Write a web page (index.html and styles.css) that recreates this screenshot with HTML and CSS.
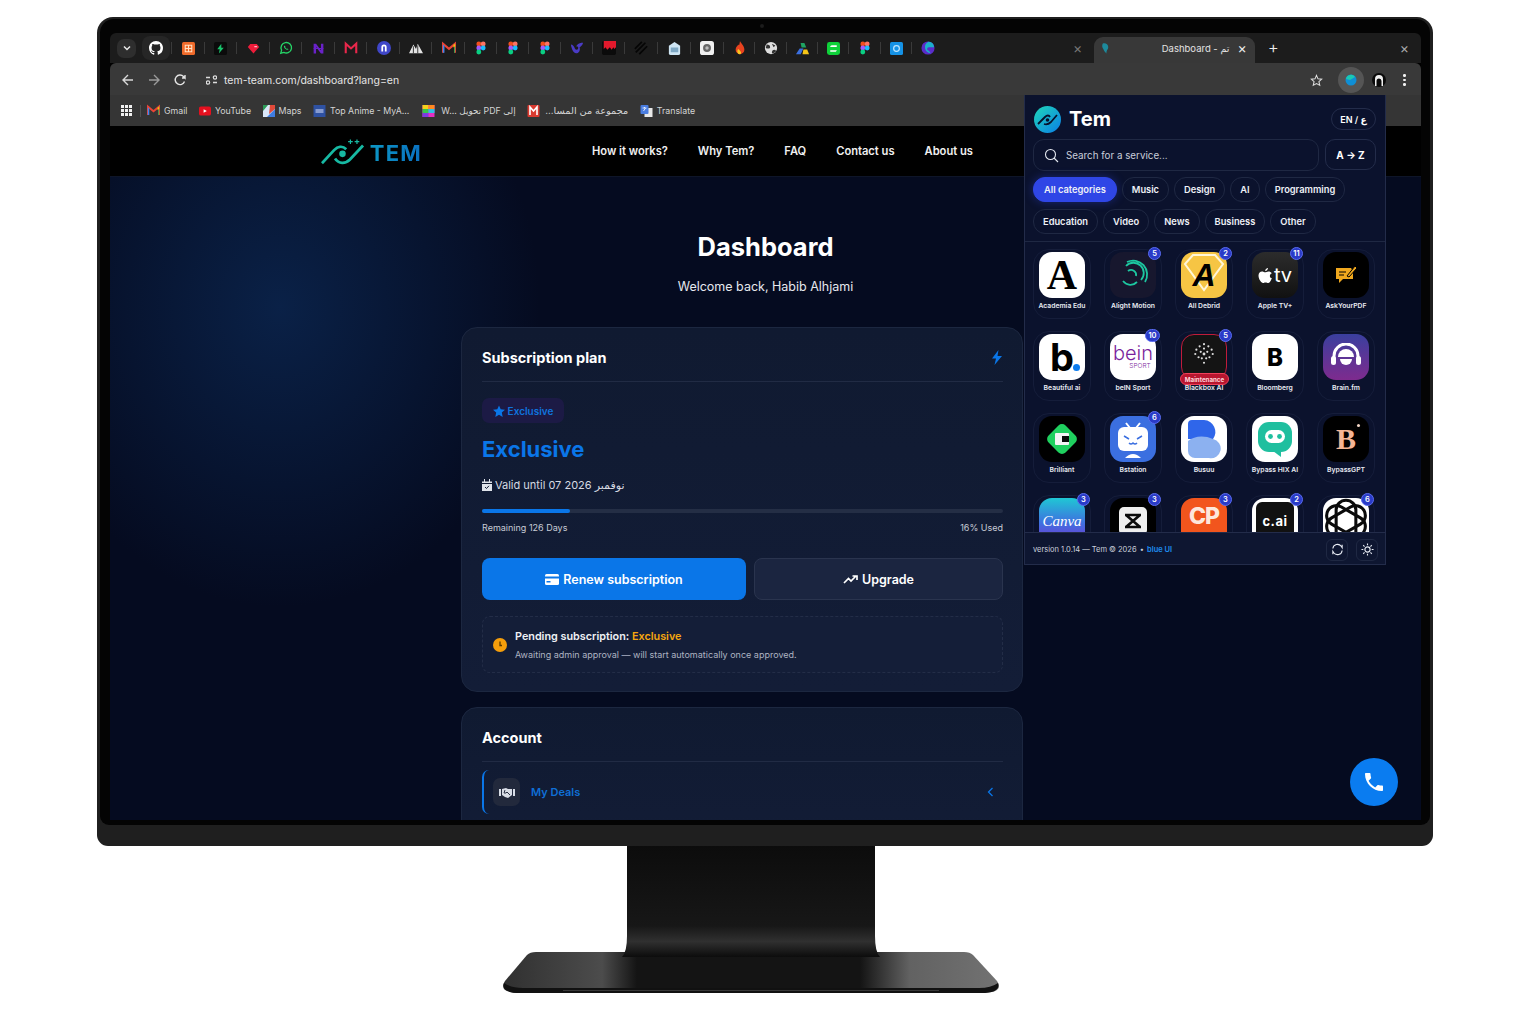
FILE: index.html
```html
<!DOCTYPE html>
<html lang="en">
<head>
  <meta charset="UTF-8" />
  <meta name="viewport" content="width=device-width, initial-scale=1.0"/>
  <title>Dashboard - Tem</title>
  <link rel="stylesheet" href="styles.css">
</head>
<body>
  <svg class="defs" width="0" height="0">
    <symbol id="figma" viewBox="0 0 16 16">
      <circle cx="5.500" cy="3.500" r="2.800" fill="#f24e1e"/><circle cx="10.500" cy="3.500" r="2.800" fill="#ff7262"/>
      <circle cx="5.500" cy="8" r="2.800" fill="#a259ff"/><circle cx="10.500" cy="8" r="2.800" fill="#1abcfe"/>
      <circle cx="5.500" cy="12.500" r="2.800" fill="#0acf83"/>
    </symbol>
    <symbol id="gmail" viewBox="0 0 16 16">
      <path d="M1 13.500V3l7 6 7-6v10.500" fill="none" stroke="#ea4335" stroke-width="2.400"/>
      <path d="M13.800 13.500V3.500L15 3v10.500z" fill="#34a853"/>
      <path d="M1 13.500V4l1.800 1.500v8z" fill="#4285f4"/>
      <path d="M13 4.500 15 3v3l-2 1.500z" fill="#fbbc04"/>
    </symbol>
  </svg>

  <div class="monitor">
    <div class="bezel">
    <div class="screen">

      <div class="tabstrip">
        <span class="tab-search"><svg width="10" height="10" viewBox="0 0 10 10"><path d="M2 3.500 5 6.500 8 3.500" fill="none" stroke="#e8e8e8" stroke-width="1.500"/></svg></span>
        <span class="pin pin-on"><svg width="14" height="14" viewBox="0 0 16 16"><path fill="#fff" d="M8 0C3.580 0 0 3.580 0 8c0 3.540 2.290 6.530 5.470 7.590.4.070.55-.17.55-.38 0-.19-.01-.82-.01-1.490-2.010.37-2.530-.49-2.690-.94-.09-.23-.48-.94-.82-1.130-.28-.15-.68-.52-.01-.53.63-.01 1.080.58 1.230.82.72 1.210 1.870.87 2.330.66.070-.52.28-.87.51-1.070-1.780-.2-3.640-.89-3.640-3.950 0-.87.31-1.590.82-2.150-.08-.2-.36-1.020.08-2.120 0 0 .67-.21 2.200.82.64-.18 1.320-.27 2-.27s1.360.09 2 .27c1.530-1.040 2.200-.82 2.200-.82.44 1.100.16 1.920.08 2.120.51.56.82 1.270.82 2.150 0 3.070-1.870 3.750-3.650 3.950.29.25.54.73.54 1.480 0 1.070-.01 1.930-.01 2.200 0 .21.15.46.55.38A8.013 8.013 0 0 0 16 8c0-4.420-3.580-8-8-8z"/></svg></span>
        <span class="pin"><svg width="13" height="13" viewBox="0 0 16 16"><rect width="16" height="16" rx="2" fill="#ef6a2a"/><path d="M4 4h8v8H4zM8 4v8M4 8h8" fill="none" stroke="#ffe2c4" stroke-width="1.300"/></svg></span>
        <span class="pin"><svg width="13" height="13" viewBox="0 0 16 16"><rect width="16" height="16" rx="2" fill="#0b0b0b"/><path d="M9 2 4 9h3l-1 5 6-7H9z" fill="#19c26b"/></svg></span>
        <span class="pin"><svg width="13" height="13" viewBox="0 0 16 16"><path d="M1 6 4 2.500h8L15 6l-7 8z" fill="#ee1c3a"/><path d="M9 5h3l1 1.500H9z" fill="#ffb7c2"/></svg></span>
        <span class="pin"><svg width="14" height="14" viewBox="0 0 16 16"><path d="M2 14l1-3.500a6 6 0 1 1 2.500 2.500z" fill="none" stroke="#25d366" stroke-width="1.500"/><path d="M6 5c-1 1 0 3 1.500 4S10 10.500 11 9.500L9.500 8.500 9 9 7 7l.5-.5z" fill="#25d366"/></svg></span>
        <span class="pin"><svg width="13" height="13" viewBox="0 0 16 16"><path d="M2 2h3l6 8V2h3v12h-3L5 6v8H2z" fill="#6a22c9"/><path d="M2 8h12" stroke="#6a22c9" stroke-width="1.500"/></svg></span>
        <span class="pin"><svg width="14" height="14" viewBox="0 0 16 16"><path d="M2 14V3l6 5.500L14 3v11" fill="none" stroke="#e8274b" stroke-width="2.400"/></svg></span>
        <span class="pin"><svg width="14" height="14" viewBox="0 0 16 16"><circle cx="8" cy="8" r="8" fill="#3f46c8"/><path d="M5 12V7a3 3 0 0 1 6 0v5H9V7a1 1 0 0 0-2 0v5z" fill="#fff"/></svg></span>
        <span class="pin"><svg width="14" height="14" viewBox="0 0 16 16"><path d="M0 14 5 4l3 5 2-6 6 11z" fill="#e4e4e4"/><path d="M5 6v8M10 5v9" stroke="#222" stroke-width="1"/></svg></span>
        <span class="pin"><svg width="14" height="14"><use href="#gmail"/></svg></span>
        <span class="pin"><svg width="14" height="14"><use href="#figma"/></svg></span>
        <span class="pin"><svg width="14" height="14"><use href="#figma"/></svg></span>
        <span class="pin"><svg width="14" height="14"><use href="#figma"/></svg></span>
        <span class="pin"><svg width="14" height="14" viewBox="0 0 16 16"><path d="M1 4c2 0 3 1 5 5 1-4 3-7 9-7-1 3-2 4-4 5 1 4-1 7-4 7S2 10 1 4z" fill="#4a3bc4"/><circle cx="7.500" cy="8" r="2" fill="#1a1a1a"/></svg></span>
        <span class="pin"><svg width="14" height="14" viewBox="0 0 16 16"><rect width="16" height="16" rx="2" fill="#0b0b0b"/><path d="M0 0h16v7l-2 2-1-2-2 3-2-3-3 3-2-3-2 2V0z" fill="#e3192c"/></svg></span>
        <span class="pin"><svg width="14" height="14" viewBox="0 0 16 16"><path d="M1 9 9 1M2 13 13 2M6 15 15 6" stroke="#050505" stroke-width="2"/></svg></span>
        <span class="pin"><svg width="15" height="15" viewBox="0 0 16 16"><path d="M8 1l6 4v8a2 2 0 0 1-2 2H4a2 2 0 0 1-2-2V5z" fill="#cfe6f4"/><path d="M4 7h8v5H4z" fill="#7ea8c4"/></svg></span>
        <span class="pin"><svg width="14" height="14" viewBox="0 0 16 16"><rect width="16" height="16" rx="3" fill="#f0f0f0"/><circle cx="8" cy="8" r="4.500" fill="#666"/><circle cx="8" cy="8" r="2" fill="#bbb"/></svg></span>
        <span class="pin"><svg width="14" height="14" viewBox="0 0 16 16"><path d="M8 0c1 3 5 5 5 10a5 5 0 0 1-10 0c0-3 2-4 3-6 1 1 1 2 2-4z" fill="#e8431f"/><path d="M6 9c-2 2-1 6 1.500 6S10 12 6 9z" fill="#f7c520"/></svg></span>
        <span class="pin"><svg width="14" height="14" viewBox="0 0 16 16"><circle cx="8" cy="8" r="7" fill="#dedede"/><path d="M3 4c3 0 4 1 4 3S4 9 2 8zM9 14c0-3 1-4 3-4l2 1c-1 2-3 3-5 3zM9 3l4 2-2 2z" fill="#333"/></svg></span>
        <span class="pin"><svg width="15" height="15" viewBox="0 0 16 16"><path d="M6 2h4l2 5H7z" fill="#1fa463"/><path d="M5 8 1 14h5l3-6z" fill="#3b6fe0"/><path d="M9 9h4l2 5H8z" fill="#f5c518"/></svg></span>
        <span class="pin"><svg width="13" height="13" viewBox="0 0 16 16"><rect width="16" height="16" rx="3" fill="#0fd13a"/><path d="M4 6c0-1 1-2 2-2h6v2H4zM4 10h8c0 1-1 2-2 2H4z" fill="#fff"/></svg></span>
        <span class="pin"><svg width="14" height="14"><use href="#figma"/></svg></span>
        <span class="pin"><svg width="13" height="13" viewBox="0 0 16 16"><rect width="16" height="16" rx="2" fill="#1592e6"/><circle cx="8" cy="8" r="3.500" fill="none" stroke="#bfe6ff" stroke-width="1.500"/></svg></span>
        <span class="pin pin-last"><svg width="14" height="14" viewBox="0 0 16 16"><circle cx="8" cy="8" r="7.500" fill="#5a2cc9"/><path d="M8 1a7 7 0 0 1 7 6H9a2 2 0 1 0 0 4l2 3A7 7 0 0 1 8 1z" fill="#1bb0c9"/></svg></span>
        <span class="tab-x tab-x-far">×</span>
        <div class="tab-active">
          <svg width="10" height="12" viewBox="0 0 10 12"><path d="M2 1c3-1 6 1 6 4S6 8 6 12L4 10C3 7 0 5 2 1z" fill="#1d8a9c"/></svg>
          <span class="tab-title">Dashboard - تم</span>
          <span class="tab-close">×</span>
        </div>
        <span class="tab-plus">+</span>
        <span class="tab-x tab-x-end">×</span>
      </div>

      <div class="toolbar">
        <svg class="tool" width="14" height="14" viewBox="0 0 14 14"><path d="M12 7H2.500M7 2 2 7l5 5" fill="none" stroke="#d8d8d8" stroke-width="1.400"/></svg>
        <svg class="tool" width="14" height="14" viewBox="0 0 14 14"><path d="M2 7h9.500M7 2l5 5-5 5" fill="none" stroke="#9a9a9a" stroke-width="1.400"/></svg>
        <svg class="tool" width="14" height="14" viewBox="0 0 14 14"><path d="M11.500 8.500A4.800 4.800 0 1 1 10.500 3.500L12 5V2M12 5H9" fill="none" stroke="#e4e4e4" stroke-width="1.400"/></svg>
        <div class="omnibox">
          <svg width="11" height="10" viewBox="0 0 11 10"><path d="M0 2.500h4M7 7.500h4" stroke="#ddd" stroke-width="1.300"/><circle cx="2" cy="7.500" r="1.700" fill="none" stroke="#ddd" stroke-width="1.200"/><circle cx="9" cy="2.500" r="1.700" fill="none" stroke="#ddd" stroke-width="1.200"/></svg>
          <span>tem-team.com/dashboard?lang=en</span>
        </div>
        <svg class="star" width="13" height="13" viewBox="0 0 14 14"><path d="M7 1.500 8.600 5.200l4 .4-3 2.700.9 3.900L7 10.200l-3.500 2 .9-3.900-3-2.700 4-.4z" fill="none" stroke="#e0e0e0" stroke-width="1.100"/></svg>
        <span class="ext-on"><svg width="12" height="12" viewBox="0 0 12 12"><circle cx="6" cy="6" r="5.500" fill="#0f8fd6"/><path d="M1 5a5 5 0 0 1 9-2L5 6z" fill="#1ac9b2"/></svg></span>
        <span class="avatar"><svg width="14" height="14" viewBox="0 0 14 14"><circle cx="7" cy="7" r="7" fill="#0a0a0a"/><path d="M3 13V6a4 4 0 0 1 8 0v7H9.500V8a2.500 2.500 0 0 0-5 0v5z" fill="#eee"/></svg></span>
        <span class="kebab"><i></i><i></i><i></i></span>
      </div>

      <div class="bookmarks">
        <span class="apps"><i></i><i></i><i></i><i></i><i></i><i></i><i></i><i></i><i></i></span>
        <span class="bm-sep"></span>
        <span class="bm"><svg width="13" height="13"><use href="#gmail"/></svg>Gmail</span>
        <span class="bm"><svg width="12" height="10" viewBox="0 0 13 10"><rect width="13" height="10" rx="2" fill="#e5101f"/><path d="M5 3l3.500 2L5 7z" fill="#fff"/></svg>YouTube</span>
        <span class="bm"><svg width="12" height="12" viewBox="0 0 12 12"><rect width="12" height="12" fill="#d9e6f8"/><path d="M0 0h5L0 6z" fill="#2c9a56"/><path d="M12 12H4l8-8z" fill="#3e7ce0"/><path d="M7 0h5v4L6 9z" fill="#e04a3a"/></svg>Maps</span>
        <span class="bm"><svg width="13" height="12" viewBox="0 0 12 12"><rect width="12" height="12" fill="#2e51a2"/><path d="M2 5h8M2 7h8" stroke="#dfe6ff" stroke-width="1"/></svg>Top Anime - MyA...</span>
        <span class="bm bm-wide"><svg width="13" height="12" viewBox="0 0 12 12"><rect width="12" height="12" fill="#e52fc4"/><rect width="6" height="4" fill="#f5d21a"/><rect x="6" width="6" height="4" fill="#ff8a1f"/><rect y="4" width="6" height="4" fill="#37c84a"/><rect x="6" y="4" width="6" height="4" fill="#2fc0e5"/><rect y="8" width="6" height="4" fill="#7b3be0"/></svg>W... تحويل PDF إلى</span>
        <span class="bm bm-rtl"><svg width="13" height="12" viewBox="0 0 12 12"><rect width="12" height="12" rx="1" fill="#d93a30"/><path d="M2.500 10V2L6 6l3.500-4v8" fill="none" stroke="#fff" stroke-width="1.600"/></svg><span dir="rtl">مجموعة من المسا...</span></span>
        <span class="bm bm-rtl-next"><svg width="13" height="12" viewBox="0 0 12 12"><rect x="4" y="3" width="8" height="9" fill="#e8e8e8"/><rect width="8" height="9" rx="1" fill="#4a7de0"/><path d="M2 3h4M4 2v1M3 6l2-3" stroke="#fff" stroke-width=".8" fill="none"/></svg>Translate</span>
      </div>

      <nav class="sitenav">
        <div class="brand">
          <svg width="48" height="28" viewBox="0 0 48 28">
            <path d="M1 26 14 12c4-4 9-5 13-1M15 21c4 6 11 6 16 1L45 7" fill="none" stroke="#17b9a3" stroke-width="3"/>
            <circle cx="23" cy="16" r="3.500" fill="#17b9a3"/>
            <path d="M29 3h5M31.500 .5v5M36 3h5M38.500 .5v5" stroke="#17b9a3" stroke-width="1.300"/>
          </svg>
          <span class="brand-name">TEM</span>
        </div>
        <div class="navlinks">
          <a>How it works?</a><a>Why Tem?</a><a>FAQ</a><a>Contact us</a><a>About us</a>
        </div>
      </nav>

      <main class="page">
        <h1>Dashboard</h1>
        <p class="welcome">Welcome back, Habib Alhjami</p>

        <section class="card">
          <div class="card-head">
            <h2>Subscription plan</h2>
            <svg width="12" height="15" viewBox="0 0 12 15"><path d="M7.500 0 1 8.500h4L3.500 15 11 6H6.500z" fill="#0a76e8"/></svg>
          </div>
          <span class="badge"><svg width="12" height="12" viewBox="0 0 14 14"><path d="M7 .5 9 5l5 .5-3.700 3.300L11.300 14 7 11.300 2.700 14l1-5.200L0 5.500 5 5z" fill="#0a76e8"/></svg>Exclusive</span>
          <div class="plan-name">Exclusive</div>
          <div class="valid">
            <svg width="10" height="12" viewBox="0 0 10 12"><path d="M0 2.500h10V12H0zM2 0h1v3H2zM7 0h1v3H7z" fill="#dfe3ea"/><path d="M0 4.500h10" stroke="#111b33"/><path d="M3 8l1.500 1.500L7 6.800" stroke="#111b33" fill="none"/></svg>
            <span>Valid until 07 2026 نوفمبر</span>
          </div>
          <div class="progress"><div class="progress-fill" style="width:16.800%"></div></div>
          <div class="progress-labels"><span>Remaining 126 Days</span><span>16% Used</span></div>
          <div class="actions">
            <a class="btn btn-primary"><svg width="14" height="11" viewBox="0 0 14 11"><rect width="14" height="11" rx="1.500" fill="#fff"/><rect y="2.500" width="14" height="2" fill="#0a76e8"/><rect x="1.500" y="7" width="4" height="1.500" fill="#0a76e8"/></svg>Renew subscription</a>
            <a class="btn btn-ghost"><svg width="15" height="9" viewBox="0 0 15 9"><path d="M1 8l4.500-4.500 2.500 2.500L13 1M9.500 1H14v4" fill="none" stroke="#fff" stroke-width="1.700"/></svg>Upgrade</a>
          </div>
          <div class="notice">
            <svg width="14" height="14" viewBox="0 0 14 14"><circle cx="7" cy="7" r="7" fill="#f59e0b"/><path d="M7 3.500V7.500H9" fill="none" stroke="#5b3a00" stroke-width="1.300"/></svg>
            <div>
              <div class="notice-title">Pending subscription: <b>Exclusive</b></div>
              <div class="notice-sub">Awaiting admin approval — will start automatically once approved.</div>
            </div>
          </div>
        </section>

        <section class="card card-account">
          <div class="card-head"><h2>Account</h2></div>
          <a class="account-row">
            <span class="row-icon"><svg width="16" height="11" viewBox="0 0 16 11"><path d="M0 2h2v7H0zM14 2h2v7h-2zM3 2l4-1 2 1h4v6l-4 3-3-1-3-2z" fill="#d8dde6"/><path d="M6 3 5 6h2l1-1 3 3" stroke="#2a3145" fill="none"/></svg></span>
            <span class="row-label">My Deals</span>
            <svg width="7" height="10" viewBox="0 0 7 10"><path d="M5.500 1 1.500 5l4 4" fill="none" stroke="#0a76e8" stroke-width="1.300"/></svg>
          </a>
        </section>

        <a class="call"><svg width="24" height="24" viewBox="0 0 24 24"><path fill="#fff" d="M6.600 10.800c1.400 2.800 3.800 5.100 6.600 6.600l2.200-2.200c.3-.3.7-.4 1-.2 1.100.4 2.300.6 3.600.6.600 0 1 .4 1 1V20c0 .6-.4 1-1 1C10.600 21 3 13.400 3 4c0-.6.4-1 1-1h3.500c.6 0 1 .4 1 1 0 1.300.2 2.500.6 3.600.1.300 0 .7-.2 1z"/></svg></a>
      </main>

      <aside class="popup">
        <header class="pop-head">
          <svg width="27" height="27" viewBox="0 0 27 27">
            <defs><linearGradient id="tl" x1="0" y1="0" x2="1" y2="1"><stop offset="0" stop-color="#1fd6b8"/><stop offset="1" stop-color="#0a7fe8"/></linearGradient></defs>
            <circle cx="13.500" cy="13.500" r="13.500" fill="url(#tl)"/>
            <path d="M4 18 11 11c2-2 4-2 5 0M10 18c3 1 5 0 7-2l6-7" fill="none" stroke="#07122c" stroke-width="1.800"/>
            <circle cx="13.500" cy="14" r="1.800" fill="#07122c"/>
          </svg>
          <span class="pop-title">Tem</span>
          <span class="lang">EN / ع</span>
        </header>
        <div class="pop-search">
          <label class="search">
            <svg width="15" height="15" viewBox="0 0 15 15"><circle cx="6.500" cy="6.500" r="5" fill="none" stroke="#e4e8f0" stroke-width="1.100"/><path d="M10 10l4 4" stroke="#e4e8f0" stroke-width="1.100"/></svg>
            <span>Search for a service...</span>
          </label>
          <span class="sort">A → Z</span>
        </div>
        <div class="chips">
          <div class="chip-row">
            <span class="chip chip-on">All categories</span><span class="chip">Music</span><span class="chip">Design</span><span class="chip">AI</span><span class="chip">Programming</span>
          </div>
          <div class="chip-row">
            <span class="chip">Education</span><span class="chip">Video</span><span class="chip">News</span><span class="chip">Business</span><span class="chip">Other</span>
          </div>
        </div>

        <div class="apps-grid">
          <div class="tile"><span class="app app-white app-serif">A</span><span class="app-name">Academia Edu</span></div>

          <div class="tile"><span class="count">5</span>
            <span class="app app-alight"><svg width="36" height="36" viewBox="0 0 36 36"><path d="M12 5a14 14 0 0 1 18 20M11 9a10 10 0 0 1 15 14M13 14a5 5 0 0 1 8 5M8 24c4 5 10 5 14 1" fill="none" stroke="#1cc7a0" stroke-width="1.800"/></svg></span>
            <span class="app-name">Alight Motion</span></div>

          <div class="tile"><span class="count">2</span>
            <span class="app app-debrid"><svg class="app-bg" width="46" height="46" viewBox="0 0 46 46"><path d="M4 12 12 3h22l8 9-19 26z" fill="none" stroke="#fff6d8" stroke-width="2"/></svg><b>A</b></span>
            <span class="app-name">All Debrid</span></div>

          <div class="tile"><span class="count">11</span>
            <span class="app app-tv"><svg width="14" height="17" viewBox="0 0 14 17"><path fill="#fff" d="M10 1c0 1.500-1.200 3-2.800 3C7 2.500 8.500 1.200 10 1zM13.500 12c-.8 2-2 4-3.300 4-1 0-1.400-.6-2.700-.6S6 16 5 16c-1.800 0-4.500-4-4.500-7.500C.5 5.700 2.300 4.500 4 4.500c1.200 0 2.300.8 3.200.8.800 0 2-.9 3.500-.8 1 0 2.300.5 3 1.700-2.800 1.700-2.300 4.800.8 5.800z"/></svg><span>tv</span></span>
            <span class="app-name">Apple TV+</span></div>

          <div class="tile">
            <span class="app app-black"><svg width="24" height="20" viewBox="0 0 24 20"><path d="M2 3h15l2 3v8H9l-4 4v-4H2z" fill="#f0a81e"/><path d="M13 11 21 1l2 2-8 9z" fill="#f0a81e" stroke="#000"/><path d="M5 7h7M5 10h5" stroke="#000" stroke-width="1.200"/></svg></span>
            <span class="app-name">AskYourPDF</span></div>

          <div class="tile"><span class="app app-white app-b">b<i></i></span><span class="app-name">Beautiful ai</span></div>

          <div class="tile"><span class="count count-wide">10</span>
            <span class="app app-white app-bein"><span>bein</span><small>SPORT</small></span>
            <span class="app-name">beIN Sport</span></div>

          <div class="tile"><span class="count">5</span>
            <span class="app app-blackbox"><svg width="24" height="24" viewBox="0 0 22 22"><g fill="#dcdcdc"><circle cx="11" cy="2" r="1"/><circle cx="7" cy="4" r="1"/><circle cx="15" cy="4" r="1"/><circle cx="4" cy="7" r="1"/><circle cx="11" cy="6" r="1"/><circle cx="18" cy="7" r="1"/><circle cx="8" cy="9" r="1"/><circle cx="14" cy="9" r="1"/><circle cx="3" cy="11" r="1"/><circle cx="11" cy="11" r="1.300"/><circle cx="19" cy="11" r="1"/><circle cx="6" cy="14" r="1"/><circle cx="16" cy="14" r="1"/><circle cx="9" cy="15" r="1"/><circle cx="13" cy="15" r="1"/><circle cx="11" cy="19" r="1"/></g></svg></span>
            <span class="maint">Maintenance</span>
            <span class="app-name">Blackbox AI</span></div>

          <div class="tile"><span class="app app-white app-bloom">B</span><span class="app-name">Bloomberg</span></div>

          <div class="tile">
            <span class="app app-brain"><svg width="32" height="28" viewBox="0 0 32 28"><path d="M4 19V13a12 12 0 0 1 24 0v6" fill="none" stroke="#fff" stroke-width="3"/><rect x="1" y="13" width="5" height="9" rx="2.500" fill="#fff"/><rect x="26" y="13" width="5" height="9" rx="2.500" fill="#fff"/><path d="M8 14a8 8 0 0 1 16 0z" fill="#fff"/><path d="M10 16h12a6 6 0 0 1-12 0z" fill="#fff"/></svg></span>
            <span class="app-name">Brain.fm</span></div>

          <div class="tile">
            <span class="app app-black"><svg width="42" height="42" viewBox="0 0 42 42"><rect x="9" y="9" width="24" height="24" rx="5" transform="rotate(45 21 21)" fill="#1fd05f"/><rect x="14" y="15" width="14" height="12" rx="1" fill="#f4f4f4"/><rect x="21" y="18" width="7" height="6" fill="#0b0b0b"/></svg></span>
            <span class="app-name">Brilliant</span></div>

          <div class="tile"><span class="count">6</span>
            <span class="app app-bstation"><svg width="38" height="38" viewBox="0 0 38 38"><path d="M12 3l4 5M26 3l-4 5" stroke="#fff" stroke-width="2"/><rect x="4" y="7" width="30" height="24" rx="6" fill="#fff"/><path d="M10 16l5 3M28 16l-5 3M15 23q2 2 4 0 2 2 4 0" fill="none" stroke="#3b6fe0" stroke-width="1.500"/><path d="M11 38q8-8 16 0z" fill="#fff"/></svg></span>
            <span class="app-name">Bstation</span></div>

          <div class="tile">
            <span class="app app-white"><svg width="40" height="40" viewBox="0 0 40 40"><path d="M4 5a4 4 0 0 1 4-4h12a12 12 0 0 1 9 19H4z" fill="#2f66ea"/><path d="M4 22c6-5 16-6 25-2a9 9 0 0 1-4 19H11a7 7 0 0 1-7-7z" fill="#8cb1f0"/></svg></span>
            <span class="app-name">Busuu</span></div>

          <div class="tile">
            <span class="app app-white"><svg width="38" height="38" viewBox="0 0 38 38"><rect x="2" y="2" width="34" height="30" rx="11" fill="#1fbf9f"/><path d="M17 31h8v6z" fill="#1fbf9f"/><rect x="9" y="10" width="20" height="13" rx="6.500" fill="#fff"/><circle cx="14.500" cy="16.500" r="2.400" fill="#1fbf9f"/><circle cx="23.500" cy="16.500" r="2.400" fill="#1fbf9f"/></svg></span>
            <span class="app-name">Bypass HIX AI</span></div>

          <div class="tile">
            <span class="app app-black app-bgpt">B<i></i></span>
            <span class="app-name">BypassGPT</span></div>

          <div class="tile"><span class="count">3</span><span class="app app-canva">Canva</span></div>

          <div class="tile"><span class="count">3</span>
            <span class="app app-black"><svg width="32" height="32" viewBox="0 0 32 32"><rect x="2" y="2" width="28" height="28" rx="5" fill="#efefef"/><path d="M8 10h16M8 22h16M9 10l14 12M23 10 9 22" fill="none" stroke="#0b0b0b" stroke-width="2.600"/></svg></span></div>

          <div class="tile"><span class="count">3</span><span class="app app-cp">CP</span></div>

          <div class="tile"><span class="count">2</span><span class="app app-white"><span class="cai">c.ai</span></span></div>

          <div class="tile"><span class="count">6</span>
            <span class="app app-white"><svg width="46" height="46" viewBox="0 0 42 42"><g fill="none" stroke="#0b0b0b" stroke-width="2.800"><rect x="12" y="2" width="18" height="38" rx="9"/><rect x="12" y="2" width="18" height="38" rx="9" transform="rotate(60 21 21)"/><rect x="12" y="2" width="18" height="38" rx="9" transform="rotate(-60 21 21)"/></g></svg></span></div>
        </div>

        <footer class="pop-foot">
          <span class="pop-ver">version 1.0.14 — Tem © 2026 <em>•</em> <b>blue UI</b></span>
          <span class="foot-btn"><svg width="13" height="13" viewBox="0 0 14 14"><path d="M2 6a5 5 0 0 1 9-2.500L12 5V2M12 8a5 5 0 0 1-9 2.500L2 9v3" fill="none" stroke="#e8ecf4" stroke-width="1.200"/></svg></span>
          <span class="foot-btn"><svg width="13" height="13" viewBox="0 0 14 14"><circle cx="7" cy="7" r="2.800" fill="none" stroke="#e8ecf4" stroke-width="1.200"/><path d="M7 .5v2M7 11.500v2M.5 7h2M11.500 7h2M2.400 2.400l1.400 1.400M10.200 10.200l1.400 1.400M2.400 11.600l1.400-1.400M10.200 3.800l1.400-1.400" stroke="#e8ecf4" stroke-width="1.200"/></svg></span>
        </footer>
      </aside>

    </div>
    </div>
  </div>

  <svg class="stand" width="496" height="147" viewBox="0 0 496 147">
    <defs>
      <linearGradient id="base" x1="0" y1="0" x2="1" y2="0"><stop offset="0" stop-color="#303030"/><stop offset=".2" stop-color="#4c4c4c"/><stop offset=".27" stop-color="#141414"/><stop offset=".72" stop-color="#141414"/><stop offset=".82" stop-color="#626262"/><stop offset="1" stop-color="#727272"/></linearGradient>
      <linearGradient id="neck" x1="0" y1="0" x2="0" y2="1"><stop offset="0" stop-color="#0c0c0c"/><stop offset=".72" stop-color="#171717"/><stop offset=".86" stop-color="#303030"/><stop offset="1" stop-color="#0c0c0c"/></linearGradient>
    </defs>
    <path d="M33 106H461q6 0 9 3L494 135q2 3 2 5Q496 147 478 147H18Q0 147 0 140q0-2 2-5L24 109q3-3 9-3z" fill="url(#base)"/>
    <path d="M1 137Q8 142 20 142H476Q488 142 495 137Q498 147 478 147H18Q-2 147 1 137z" fill="#111"/>
    <path d="M60 144.500H436" stroke="#4a4a4a" stroke-width=".7"/>
    <path d="M124 0H372V90q0 16 5 21H119q5-5 5-21z" fill="url(#neck)"/>
  </svg>
</body>
</html>
```

FILE: styles.css
```css
* { margin: 0; padding: 0; box-sizing: border-box; }
body {
  background: #fff;
  font-family: "Inter", "DejaVu Sans", sans-serif;
  padding: 17px 0 0 97px;
  color: #fff;
  overflow: hidden;
  height: 1024px;
}
a { display: block; }
.defs { position: absolute; }

/* monitor */
.monitor {
  position: relative;
  width: 1336px;
  height: 829px;
  padding: 2px 3px 21px 3px;
  background: #1f1f1f;
  border-radius: 16px 16px 11px 11px;
}
.monitor::before {
  content: "";
  position: absolute;
  left: 663px;
  top: 7px;
  width: 4px;
  height: 4px;
  border-radius: 50%;
  background: #1c1c1c;
}
.bezel {
  height: 100%;
  padding: 14px 9px 5px 10px;
  background: #040404;
  border-radius: 14px 14px 9px 9px;
}
.screen {
  position: relative;
  height: 100%;
  display: flex;
  flex-direction: column;
  overflow: hidden;
  border-radius: 6px 6px 0 0;
  background: #000;
}
.stand { display: block; margin-left: 406px; }

/* browser tabs */
.tabstrip {
  height: 30px;
  flex: none;
  display: flex;
  align-items: center;
  padding-left: 7px;
  background: #1c1c1c;
}
.tab-search {
  width: 19px;
  height: 19px;
  margin-right: 6px;
  display: flex;
  align-items: center;
  justify-content: center;
  border-radius: 7px;
  background: #2e2e2e;
}
.pin {
  width: 31.400px;
  height: 24px;
  flex: none;
  display: flex;
  align-items: center;
  justify-content: center;
  position: relative;
}
.pin:nth-child(-n+19) { width: 33px; }
.pin:nth-child(-n+16) { width: 32px; }
.pin:nth-child(-n+11) { width: 32.550px; }
.pin::after {
  content: "";
  position: absolute;
  right: 0;
  top: 6px;
  height: 12px;
  width: 1px;
  background: #3a3a3a;
}
.pin-last::after { display: none; }
.pin.pin-on { background: #262626; border-radius: 8px; width: 28px; margin-right: 2px; }
.pin-on::after { right: -2px; }
.tab-x { color: #777; font-size: 14px; line-height: 1; text-align: center; }
.tab-x-far { margin-left: 126px; width: 16px; }
.tab-active {
  width: 161px;
  height: 26px;
  align-self: flex-end;
  margin-left: 8px;
  padding: 0 8px 4px 7px;
  display: flex;
  align-items: center;
  background: #383838;
  border-radius: 9px 9px 0 0;
  font-size: 9.500px;
  color: #e2e2e2;
}
.tab-title { flex: 1; text-align: center; margin-left: 52px; white-space: nowrap; }
.tab-close { font-size: 14px; line-height: 1; margin-left: 8px; color: #eee; }
.tab-plus { margin: -2px 0 0 13px; font-size: 17px; font-weight: 300; line-height: 1; color: #eee; }
.tab-x-end { margin-left: 121px; color: #aaa; }

/* browser toolbar */
.toolbar {
  height: 32px;
  flex: none;
  display: flex;
  align-items: center;
  padding: 2px 0 0 11px;
  background: #393939;
  border-radius: 6px 6px 0 0;
}
.tool { margin-right: 12px; }
.omnibox {
  flex: 1;
  height: 25px;
  margin-left: 2px;
  padding-left: 5px;
  display: flex;
  align-items: center;
  gap: 7px;
  font-size: 10.500px;
  color: #e6e6e6;
}
.star { margin-right: 15px; }
.ext-on {
  width: 26px;
  height: 26px;
  display: flex;
  align-items: center;
  justify-content: center;
  border-radius: 50%;
  background: #555;
}
.avatar { margin: 0 17px 0 8px; display: flex; }
.kebab {
  width: 3px;
  margin-right: 15px;
  display: flex;
  flex-direction: column;
  gap: 2px;
}
.kebab i { width: 2.500px; height: 2.500px; border-radius: 50%; background: #eee; }

/* bookmarks */
.bookmarks {
  height: 31px;
  flex: none;
  display: flex;
  align-items: center;
  padding-left: 11px;
  background: #353535;
  font-size: 8.800px;
  color: #d4d4d4;
}
.apps {
  width: 11px;
  display: grid;
  grid-template-columns: repeat(3, 3px);
  gap: 1px;
}
.apps i { height: 3px; background: #f0f0f0; }
.bm-sep { width: 1px; height: 12px; margin: 0 6px 0 8px; background: #505050; }
.bm { display: flex; align-items: center; gap: 4px; margin-right: 11.500px; white-space: nowrap; }
.bm-wide { margin-left: 1.500px; gap: 6px; }
.bm-rtl { gap: 5px; }
.bm-rtl span { font-size: 9.800px; }

/* site nav */
.sitenav {
  height: 51px;
  flex: none;
  display: flex;
  align-items: center;
  padding: 2px 0 0 211px;
  background: #000;
  border-bottom: 1px solid #0e1528;
}
.brand { display: flex; align-items: center; gap: 4px; width: 101px; }
.brand-name {
  margin-top: 2px;
  font-size: 22px;
  font-weight: 700;
  letter-spacing: 1.200px;
  background: linear-gradient(90deg, #0c96c4, #0a70c0);
  -webkit-background-clip: text;
  background-clip: text;
  color: transparent;
}
.navlinks {
  margin: -3px 0 0 170px;
  display: flex;
  gap: 30px;
  font-size: 11.150px;
  font-weight: 600;
  color: #f0f0f0;
}

/* page */
.page {
  position: relative;
  flex: 1;
  overflow: hidden;
  padding-top: 54px;
  background:
    radial-gradient(ellipse 260px 300px at 170px 130px, #0a2147 0, rgba(10,33,71,0) 100%),
    #050b20;
}
h1 { font-size: 25.500px; line-height: 32px; font-weight: 700; text-align: center; }
.welcome { margin-top: 14px; font-size: 12.500px; line-height: 20px; text-align: center; color: #e6e8ee; }
.card {
  width: 562px;
  margin: 30px 0 0 351px;
  padding: 0 19px 0 20px;
  height: 365px;
  background: linear-gradient(#101a31, #131d37);
  border: 1px solid #1c2740;
  border-radius: 16px;
}
.card-account { height: 160px; margin-top: 15px; }
.card-head {
  height: 54px;
  padding-top: 6px;
  margin-bottom: 16px;
  display: flex;
  align-items: center;
  justify-content: space-between;
  border-bottom: 1px solid #212b44;
}
h2 { font-size: 14.500px; font-weight: 700; }
.badge {
  width: 82px;
  height: 25px;
  display: flex;
  align-items: center;
  justify-content: center;
  gap: 3px;
  border-radius: 7px;
  background: #1c1a45;
  font-size: 10px;
  font-weight: 600;
  color: #0f74de;
}
.plan-name { margin-top: 11px; font-size: 22px; line-height: 30px; font-weight: 700; color: #0a76e8; }
.valid {
  margin-top: 13px;
  display: flex;
  align-items: center;
  gap: 3px;
  font-size: 11px;
  line-height: 16px;
  color: #d6dae2;
}
.progress { height: 4px; margin-top: 16px; border-radius: 2px; background: #242e45; }
.progress-fill { height: 100%; border-radius: 2px; background: #0a76e8; }
.progress-labels {
  margin-top: 8px;
  display: flex;
  justify-content: space-between;
  font-size: 9px;
  line-height: 13px;
  color: #c8ccd6;
}
.actions { margin-top: 24px; display: flex; gap: 8px; }
.btn {
  height: 42px;
  display: flex;
  align-items: center;
  justify-content: center;
  gap: 4px;
  border-radius: 8px;
  font-size: 12.500px;
  font-weight: 600;
}
.btn-primary { flex: 0 0 264px; background: #0a76e8; }
.btn-ghost { flex: 1; background: #1b2540; border: 1px solid #2a344e; }
.notice {
  height: 57px;
  margin-top: 16px;
  padding-left: 10px;
  display: flex;
  align-items: center;
  gap: 8px;
  border: 1px dashed #232d47;
  border-radius: 8px;
  background: #141e38;
}
.notice-title { font-size: 10.800px; font-weight: 600; line-height: 14px; color: #eef0f4; }
.notice-title b { font-weight: 600; color: #f5a70f; }
.notice-sub { margin-top: 5px; font-size: 9px; line-height: 11px; color: #aeb4c2; }
.card-account .card-head { margin-bottom: 8px; }
.account-row {
  height: 44px;
  display: flex;
  align-items: center;
  padding: 0 9px 0 9px;
  border-left: 2px solid #0a76e8;
  border-radius: 7px 0 0 7px;
}
.row-icon {
  width: 27px;
  height: 28px;
  margin-right: 11px;
  display: flex;
  align-items: center;
  justify-content: center;
  border-radius: 7px;
  background: #22293c;
}
.row-label { flex: 1; font-size: 11px; font-weight: 600; color: #0f6fd6; }
.call {
  position: absolute;
  right: 23px;
  bottom: 14px;
  width: 48px;
  height: 48px;
  display: flex;
  align-items: center;
  justify-content: center;
  border-radius: 50%;
  background: #0a7cf0;
}

/* extension popup */
.popup {
  position: absolute;
  left: 914px;
  top: 62px;
  width: 362px;
  height: 470px;
  display: flex;
  flex-direction: column;
  background: #0b122d;
  border: 1px solid #232c4a;
  border-top: 0;
}
.pop-head { height: 43px; padding: 5px 9px 0 9px; display: flex; align-items: center; }
.pop-title { margin-left: 8px; font-size: 20px; font-weight: 700; flex: 1; }
.lang {
  width: 45px;
  height: 22px;
  display: flex;
  align-items: center;
  justify-content: center;
  border: 1px solid #232c4a;
  border-radius: 11px;
  font-size: 9px;
  font-weight: 600;
}
.pop-search { margin-top: 1px; padding: 0 9px 0 8px; display: flex; gap: 6px; }
.search {
  flex: 1;
  height: 32px;
  padding-left: 10px;
  display: flex;
  align-items: center;
  gap: 7px;
  border: 1px solid #1f2843;
  border-radius: 11px;
  font-size: 9.800px;
  color: #c9cedb;
}
.sort {
  width: 51px;
  height: 31px;
  display: flex;
  align-items: center;
  justify-content: center;
  border: 1px solid #232c4a;
  border-radius: 10px;
  font-size: 10px;
  font-weight: 700;
}
.chips {
  height: 64px;
  margin-top: 6px;
  padding: 0 8px;
  display: flex;
  flex-direction: column;
  gap: 7px;
}
.chip-row { display: flex; gap: 5px; }
.chip {
  height: 25px;
  padding: 0 9px;
  display: flex;
  align-items: center;
  border: 1px solid #1f2843;
  border-radius: 12px;
  font-size: 9.300px;
  font-weight: 600;
  color: #eef0f6;
}
.chip-on { padding: 0 10px; background: #2f46e6; border-color: #2f46e6; box-shadow: 0 0 10px rgba(47,70,230,.4); }

.apps-grid {
  flex: 1;
  min-height: 0;
  overflow: hidden;
  padding: 7px 0 0 8px;
  display: grid;
  grid-template-columns: repeat(5, 58px);
  grid-auto-rows: 70px;
  gap: 12px 13px;
  border-top: 1px solid #1f2843;
}
.tile {
  position: relative;
  height: 70px;
  padding-top: 2px;
  display: flex;
  flex-direction: column;
  align-items: center;
  border: 1px solid #151d3a;
  border-radius: 16px;
}
.app {
  position: relative;
  width: 46px;
  height: 46px;
  flex: none;
  display: flex;
  align-items: center;
  justify-content: center;
  overflow: hidden;
  border-radius: 13px;
}
.app-name { margin-top: 3px; font-size: 6.800px; line-height: 9px; font-weight: 600; white-space: nowrap; color: #e8ebf2; }
.count {
  position: absolute;
  z-index: 2;
  top: -3px;
  right: 0;
  min-width: 13px;
  height: 13px;
  display: flex;
  align-items: center;
  justify-content: center;
  border: 1px solid #5a6cf0;
  border-radius: 7px;
  background: #2a3bc8;
  font-size: 7.500px;
  font-weight: 600;
}
.count-wide { min-width: 15px; right: 1px; }
.app-white { background: #fff; color: #000; }
.app-black { background: #000; }
.app-serif { font: 700 42px/46px "Liberation Serif", serif; }
.app-alight { background: #17172e; }
.app-debrid { background: #f6c544; color: #000; }
.app-debrid b { position: relative; font: italic 700 32px/40px "Liberation Sans", sans-serif; }
.app-bg { position: absolute; left: 0; top: 0; }
.app-tv { background: linear-gradient(#2c2c2c, #111); gap: 2px; font-size: 20px; }
.app-tv span { margin-top: -1px; }
.app-b { font: 700 38px/46px "Inter", sans-serif; }
.app-b i {
  position: absolute;
  right: 5px;
  bottom: 9px;
  width: 7px;
  height: 7px;
  border-radius: 50%;
  background: #0a7cf0;
}
.app-bein { flex-direction: column; color: #7a1f9c; font-size: 20px; font-weight: 300; line-height: 18px; }
.app-bein small { font-size: 6.500px; line-height: 8px; margin-left: 14px; }
.app-blackbox { background: #141414; border: 1px solid #c01c3a; padding-bottom: 6px; }
.maint {
  position: absolute;
  z-index: 2;
  left: 4px;
  top: 41px;
  width: 49px;
  height: 12px;
  display: flex;
  align-items: center;
  justify-content: center;
  border: 1px solid #f0405a;
  border-radius: 6px;
  background: #b8162f;
  font-size: 6.200px;
  font-weight: 700;
  color: #ffd7dc;
}
.app-bloom { font-size: 24px; font-weight: 800; }
.app-brain { background: linear-gradient(#3a3f9e, #7e2b8e); }
.app-bstation { background: #3b6fe0; }
.app-bgpt { font: 700 30px/40px "Liberation Serif", serif; color: #f5b595; }
.app-bgpt i {
  position: absolute;
  right: 9px;
  top: 8px;
  width: 3px;
  height: 3px;
  border-radius: 50%;
  background: #f5d8c8;
}
.app-canva {
  background: linear-gradient(#1fc7d4 0, #3f6fe0 55%, #7b2fd0 100%);
  font: italic 400 15px/20px "Liberation Serif", serif;
}
.app-cp {
  padding-bottom: 10px;
  background: #f2551d;
  font-size: 23px;
  line-height: 28px;
  font-weight: 800;
  letter-spacing: -1px;
  color: #fde7dc;
}
.cai {
  width: 38px;
  height: 38px;
  display: flex;
  align-items: center;
  justify-content: center;
  border-radius: 6px;
  background: #111;
  color: #fff;
  font: 700 13px "Inter", sans-serif;
  letter-spacing: .5px;
}

.pop-foot {
  position: relative;
  height: 32px;
  flex: none;
  padding: 2px 7px 0 8px;
  display: flex;
  align-items: center;
  gap: 8px;
  background: #0e1631;
  border-top: 1px solid #232c4a;
}
.pop-ver { flex: 1; font-size: 7.500px; color: #ccd1dc; }
.pop-ver em { font-style: normal; margin: 0 1px; }
.pop-ver b { font-weight: 600; color: #1e8df0; }
.foot-btn {
  width: 22px;
  height: 22px;
  display: flex;
  align-items: center;
  justify-content: center;
  border: 1px solid #1f2843;
  border-radius: 6px;
}
```
